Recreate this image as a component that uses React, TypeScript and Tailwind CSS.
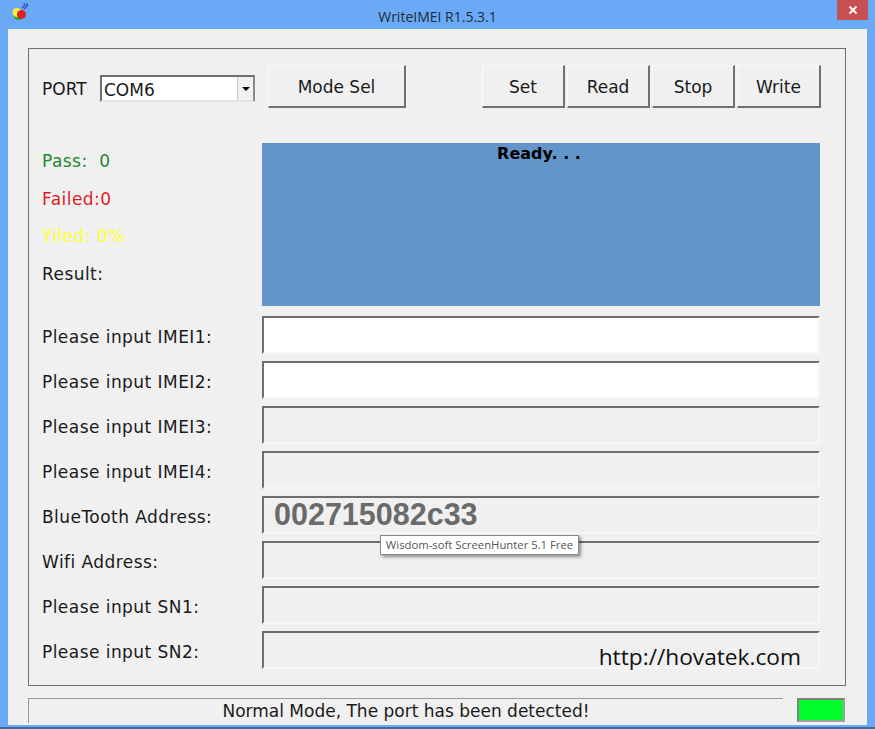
import { FC } from 'react';

const font = "font-['DejaVu_Sans',sans-serif]";

const rows = [
  { label: 'Please input IMEI1:', white: true },
  { label: 'Please input IMEI2:', white: true },
  { label: 'Please input IMEI3:' },
  { label: 'Please input IMEI4:' },
  { label: 'BlueTooth Address:', value: '002715082c33' },
  { label: 'Wifi Address:' },
  { label: 'Please input SN1:' },
  { label: 'Please input SN2:', site: true },
];

const Btn: FC<{ text: string; className: string }> = ({ text, className }) => (
  <button
    className={`h-[43px] bg-[#f0f0f0] border border-t-[#fafafa] border-l-[#fafafa] border-r-2 border-b-2 border-r-[#707070] border-b-[#707070] pt-[3px] text-[17px] text-[#1a1a1a] ${className}`}
  >
    {text}
  </button>
);

const Row: FC<{ label: string; white?: boolean; value?: string; site?: boolean }> = ({
  label,
  white,
  value,
  site,
}) => (
  <div className="flex h-[38px] items-center">
    <div className="w-[233px] shrink-0 pl-[13px] pt-[5px] text-[17px] tracking-[0.45px] text-[#1a1a1a]">{label}</div>
    <div
      className={`flex h-[38px] w-[558px] items-center border-2 border-t-[#6e6e6e] border-l-[#6e6e6e] border-r-[#f6f6f6] border-b-[#f6f6f6] ${white ? 'bg-white' : 'bg-[#f0f0f0]'}`}
    >
      {value && (
        <span className="pl-[10px] font-['Liberation_Sans',sans-serif] text-[30.5px] font-bold text-[#6a6a6a]">
          {value}
        </span>
      )}
      {site && (
        <span className="ml-auto mr-[17px] mt-[14px] font-['Open_Sans',sans-serif] text-[22.7px] text-[#111]">
          http://hovatek.com
        </span>
      )}
    </div>
  </div>
);

export default function App() {
  return (
    <div className={`relative flex h-[729px] w-[875px] flex-col overflow-hidden border-b-2 border-b-[#3d6c9c] bg-[#6aa9f5] ${font}`}>
      <div className="relative flex h-[29px] shrink-0 items-start justify-center pt-[6px]">
        <svg className="absolute left-[10px] top-[2px]" width="20" height="20" viewBox="0 0 20 20">
          <circle cx="8.5" cy="13" r="5" fill="#12b312" />
          <circle cx="7" cy="10.5" r="4.5" fill="#f4ee3c" />
          <circle cx="11.5" cy="12.5" r="4.5" fill="#e3202a" />
          <path d="M12 6l2-2M14 7l4-4M14 1l1 3M17 1v3" stroke="#3b49c4" strokeWidth="1.3" fill="none" />
        </svg>
        <span className="font-['Open_Sans',sans-serif] text-[14px] text-[#1e2c3a]">WriteIMEI R1.5.3.1</span>
        <div className="absolute right-[7px] top-0 flex h-[20px] w-[31px] items-center justify-center bg-[#c75050]">
          <svg width="10" height="10" viewBox="0 0 10 10">
            <path d="M1.5 1.5l7 7M8.5 1.5l-7 7" stroke="#fff" strokeWidth="1.8" />
          </svg>
        </div>
      </div>

      <div className="mx-[8px] mb-[2px] flex-1 bg-[#f0f0f0] px-[20px] pt-[19px]">
        <div className="relative h-[638px] w-[818px] border border-[#6f6f6f]">
          <div className="mt-[16px] flex h-[43px] items-center">
            <div className="flex w-[239px] items-center pt-[4px]">
              <span className="w-[71px] shrink-0 pl-[13px] pt-[2px] text-[17px] text-[#1a1a1a]">PORT</span>
              <div className="flex h-[27px] w-[155px] shrink-0 items-center border-2 border-t-[#707070] border-l-[#707070] border-r-[#8a8a8a] border-b-[#e4e4e4] bg-white pl-[2px] pt-[4px] text-[17px] text-[#1a1a1a]">
                <span>COM6</span>
                <div className="ml-auto -mt-[4px] flex h-[23px] w-[16px] items-center justify-center border-l border-[#c8c8c8] bg-[#f0f0f0]">
                  <div className="h-0 w-0 border-x-[4px] border-t-[4px] border-x-transparent border-t-black" />
                </div>
              </div>
            </div>
            <Btn text="Mode Sel" className="w-[138px]" />
            <div className="ml-[76px] flex gap-[2px]">
              <Btn text="Set" className="w-[83px]" />
              <Btn text="Read" className="w-[83px]" />
              <Btn text="Stop" className="w-[83px]" />
              <Btn text="Write" className="w-[84px]" />
            </div>
          </div>

          <div className="mt-[35px] flex h-[163px]">
            <div className="flex w-[233px] shrink-0 flex-col gap-[17.5px] pl-[13px] pt-[8px] text-[17px] leading-[20px] tracking-[0.45px]">
              <div className="whitespace-pre text-[#1f8a2e]">Pass:  0</div>
              <div className="text-[#dc1f2a]">Failed:0</div>
              <div className="whitespace-pre text-[#ffff33]">Yiled: 0%</div>
              <div className="text-[#1a1a1a]">Result:</div>
            </div>
            <div className="w-[558px] bg-[#6495c8] pr-[4px] text-center text-[16px] font-bold leading-[21px] text-black">
              Ready. . .
            </div>
          </div>

          <div className="mt-[10px] flex flex-col gap-[7px]">
            {rows.map((r) => (
              <Row key={r.label} {...r} />
            ))}
          </div>

          <div className="absolute left-[351px] top-[486px] flex h-[20px] w-[199px] items-center justify-center border border-[#8a8a8a] bg-white font-['Open_Sans',sans-serif] text-[11.3px] text-[#555] shadow-[2px_2px_3px_rgba(0,0,0,0.4)]">
            Wisdom-soft ScreenHunter 5.1 Free
          </div>
        </div>

        <div className="mt-[12px] flex items-start">
          <div className="flex h-[25px] w-[755px] items-center justify-center border-t border-l border-t-[#9a9a9a] border-l-[#9a9a9a] pt-[1px] text-[17px] text-[#1a1a1a]">
            Normal Mode, The port has been detected!
          </div>
          <div className="ml-[14px] h-[24px] w-[48px] border-2 border-t-[#808080] border-l-[#808080] border-r-[#a0a0a0] border-b-[#a0a0a0] bg-[#00ff2a]" />
        </div>
      </div>
    </div>
  );
}
